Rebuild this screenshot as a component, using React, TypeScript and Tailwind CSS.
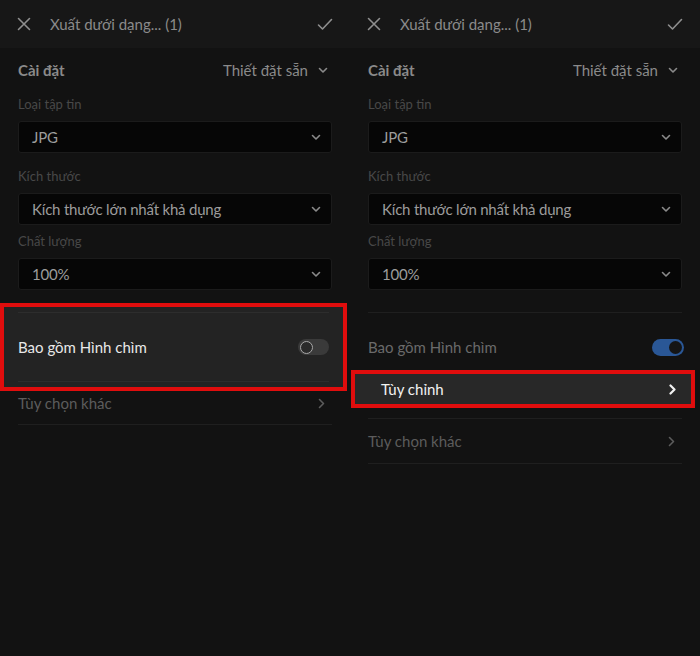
import React from "react";

const font = { fontFamily: "Lato, 'Noto Sans', sans-serif" };

function ChevronDown({ className = "" }: { className?: string }) {
  return (
    <svg width="10" height="7" viewBox="0 0 10 7" className={className} fill="none">
      <path d="M1.5 1.5 L5 5 L8.5 1.5" stroke="currentColor" strokeWidth="1.6" strokeLinecap="round" strokeLinejoin="round" />
    </svg>
  );
}

function ChevronRight({ className = "", w = 1.6 }: { className?: string; w?: number }) {
  return (
    <svg width="7" height="11" viewBox="0 0 7 11" className={className} fill="none">
      <path d="M1.5 1.5 L5.5 5.5 L1.5 9.5" stroke="currentColor" strokeWidth={w} strokeLinecap="round" strokeLinejoin="round" />
    </svg>
  );
}

function XIcon() {
  return (
    <svg width="14" height="14" viewBox="0 0 14 14" fill="none" className="text-[#8f8f8f]">
      <path d="M1.5 1.5 L12.5 12.5 M12.5 1.5 L1.5 12.5" stroke="currentColor" strokeWidth="1.6" strokeLinecap="round" />
    </svg>
  );
}

function Check() {
  return (
    <svg width="16" height="13" viewBox="0 0 16 13" fill="none" className="text-[#8f8f8f]">
      <path d="M1.5 7 L5.5 11 L14.5 1.5" stroke="currentColor" strokeWidth="1.6" strokeLinecap="round" strokeLinejoin="round" />
    </svg>
  );
}

function Select({ value }: { value: string }) {
  return (
    <div className="h-[32px] rounded-[3px] bg-[#060606] border border-[#1b1b1b] flex items-center justify-between pl-[13px] pr-[10px]">
      <span className="text-[15px] text-[#9c9c9c] tracking-[-0.2px]">{value}</span>
      <ChevronDown className="text-[#8a8a8a]" />
    </div>
  );
}

function Label({ text, cls }: { text: string; cls: string }) {
  return <div className={`text-[13px] text-[#484848] flex items-center ${cls}`}>{text}</div>;
}

function Divider({ cls = "" }: { cls?: string }) {
  return <div className={`h-px bg-[#1f1f1f] ${cls}`} />;
}

function ToggleOff() {
  return (
    <div className="w-[31px] h-[16px] rounded-full bg-[#3a3a3a] flex items-center pl-[2px]">
      <div className="w-[13px] h-[13px] rounded-full border-[1.5px] border-[#a8a8a8] bg-[#2a2a2a]" />
    </div>
  );
}

function ToggleOn() {
  return (
    <div className="w-[32px] h-[17px] rounded-full bg-[#2a5796] flex items-center justify-end pr-[2px]">
      <div className="w-[13px] h-[13px] rounded-full bg-[#151515]" />
    </div>
  );
}

function Top() {
  return (
    <>
      <div className="h-[48px] bg-[#171717] flex items-center px-[17px]">
        <XIcon />
        <span className="ml-[19px] text-[15px] text-[#8a8a8a] flex-1">Xuất dưới dạng... (1)</span>
        <Check />
      </div>
      <div className="px-[18px]">
        <div className="h-[44px] flex items-center justify-between">
          <span className="text-[15px] font-bold text-[#8a8a8a]">Cài đặt</span>
          <div className="flex items-center gap-[10px] pr-[4px]">
            <span className="text-[15px] text-[#8a8a8a]">Thiết đặt sẵn</span>
            <ChevronDown className="text-[#8a8a8a]" />
          </div>
        </div>
        <Label text="Loại tập tin" cls="h-[26px]" />
        <div className="mt-[3px]">
          <Select value="JPG" />
        </div>
        <Label text="Kích thước" cls="h-[20px] mt-[14px]" />
        <div className="mt-[6px]">
          <Select value="Kích thước lớn nhất khả dụng" />
        </div>
        <Label text="Chất lượng" cls="h-[20px] mt-[7px]" />
        <div className="mt-[6px]">
          <Select value="100%" />
        </div>
      </div>
    </>
  );
}

function LeftPanel() {
  return (
    <div className="w-[350px] h-[656px] bg-[#121212]">
      <Top />
      <div className="px-[18px]">
        <div className="mt-[13px] -ml-[18px] -mr-[15px] border-4 border-[#e00d0d] bg-[#232323] px-[14px] pt-[5px] pb-[5px]">
          <div className="h-px bg-[#2d2d2d]" />
          <div className="h-[68px] flex items-center justify-between">
            <span className="text-[15px] text-[#e8e8e8]">Bao gồm Hình chìm</span>
            <ToggleOff />
          </div>
          <div className="h-px bg-[#2d2d2d]" />
        </div>
        <div className="h-[24px] flex items-center justify-between pr-[7px]">
          <span className="text-[15px] text-[#5c5c5c]">Tùy chọn khác</span>
          <ChevronRight className="text-[#5c5c5c]" />
        </div>
        <Divider cls="mt-[9px]" />
      </div>
    </div>
  );
}

function RightPanel() {
  return (
    <div className="w-[350px] h-[656px] bg-[#121212]">
      <Top />
      <div className="px-[18px]">
        <Divider cls="mt-[22px]" />
        <div className="h-[57px] pt-[12px] flex items-center justify-between -mr-[2px]">
          <span className="text-[15px] text-[#6a6a6a]">Bao gồm Hình chìm</span>
          <ToggleOn />
        </div>
        <div className="-ml-[17px] -mr-[13px] h-[38px] border-4 border-[#e00d0d] bg-[#282828] flex items-center justify-between pl-[26px] pr-[15px]">
          <span className="text-[15px] text-[#f2f2f2]">Tùy chỉnh</span>
          <ChevronRight className="text-[#f2f2f2]" w={2.2} />
        </div>
        <Divider cls="mt-[10px]" />
        <div className="h-[44px] flex items-center justify-between pr-[7px]">
          <span className="text-[15px] text-[#5c5c5c]">Tùy chọn khác</span>
          <ChevronRight className="text-[#5c5c5c]" />
        </div>
        <Divider />
      </div>
    </div>
  );
}

export default function App() {
  return (
    <div className="w-[700px] h-[656px] flex bg-[#121212] overflow-hidden" style={font}>
      <LeftPanel />
      <RightPanel />
    </div>
  );
}
